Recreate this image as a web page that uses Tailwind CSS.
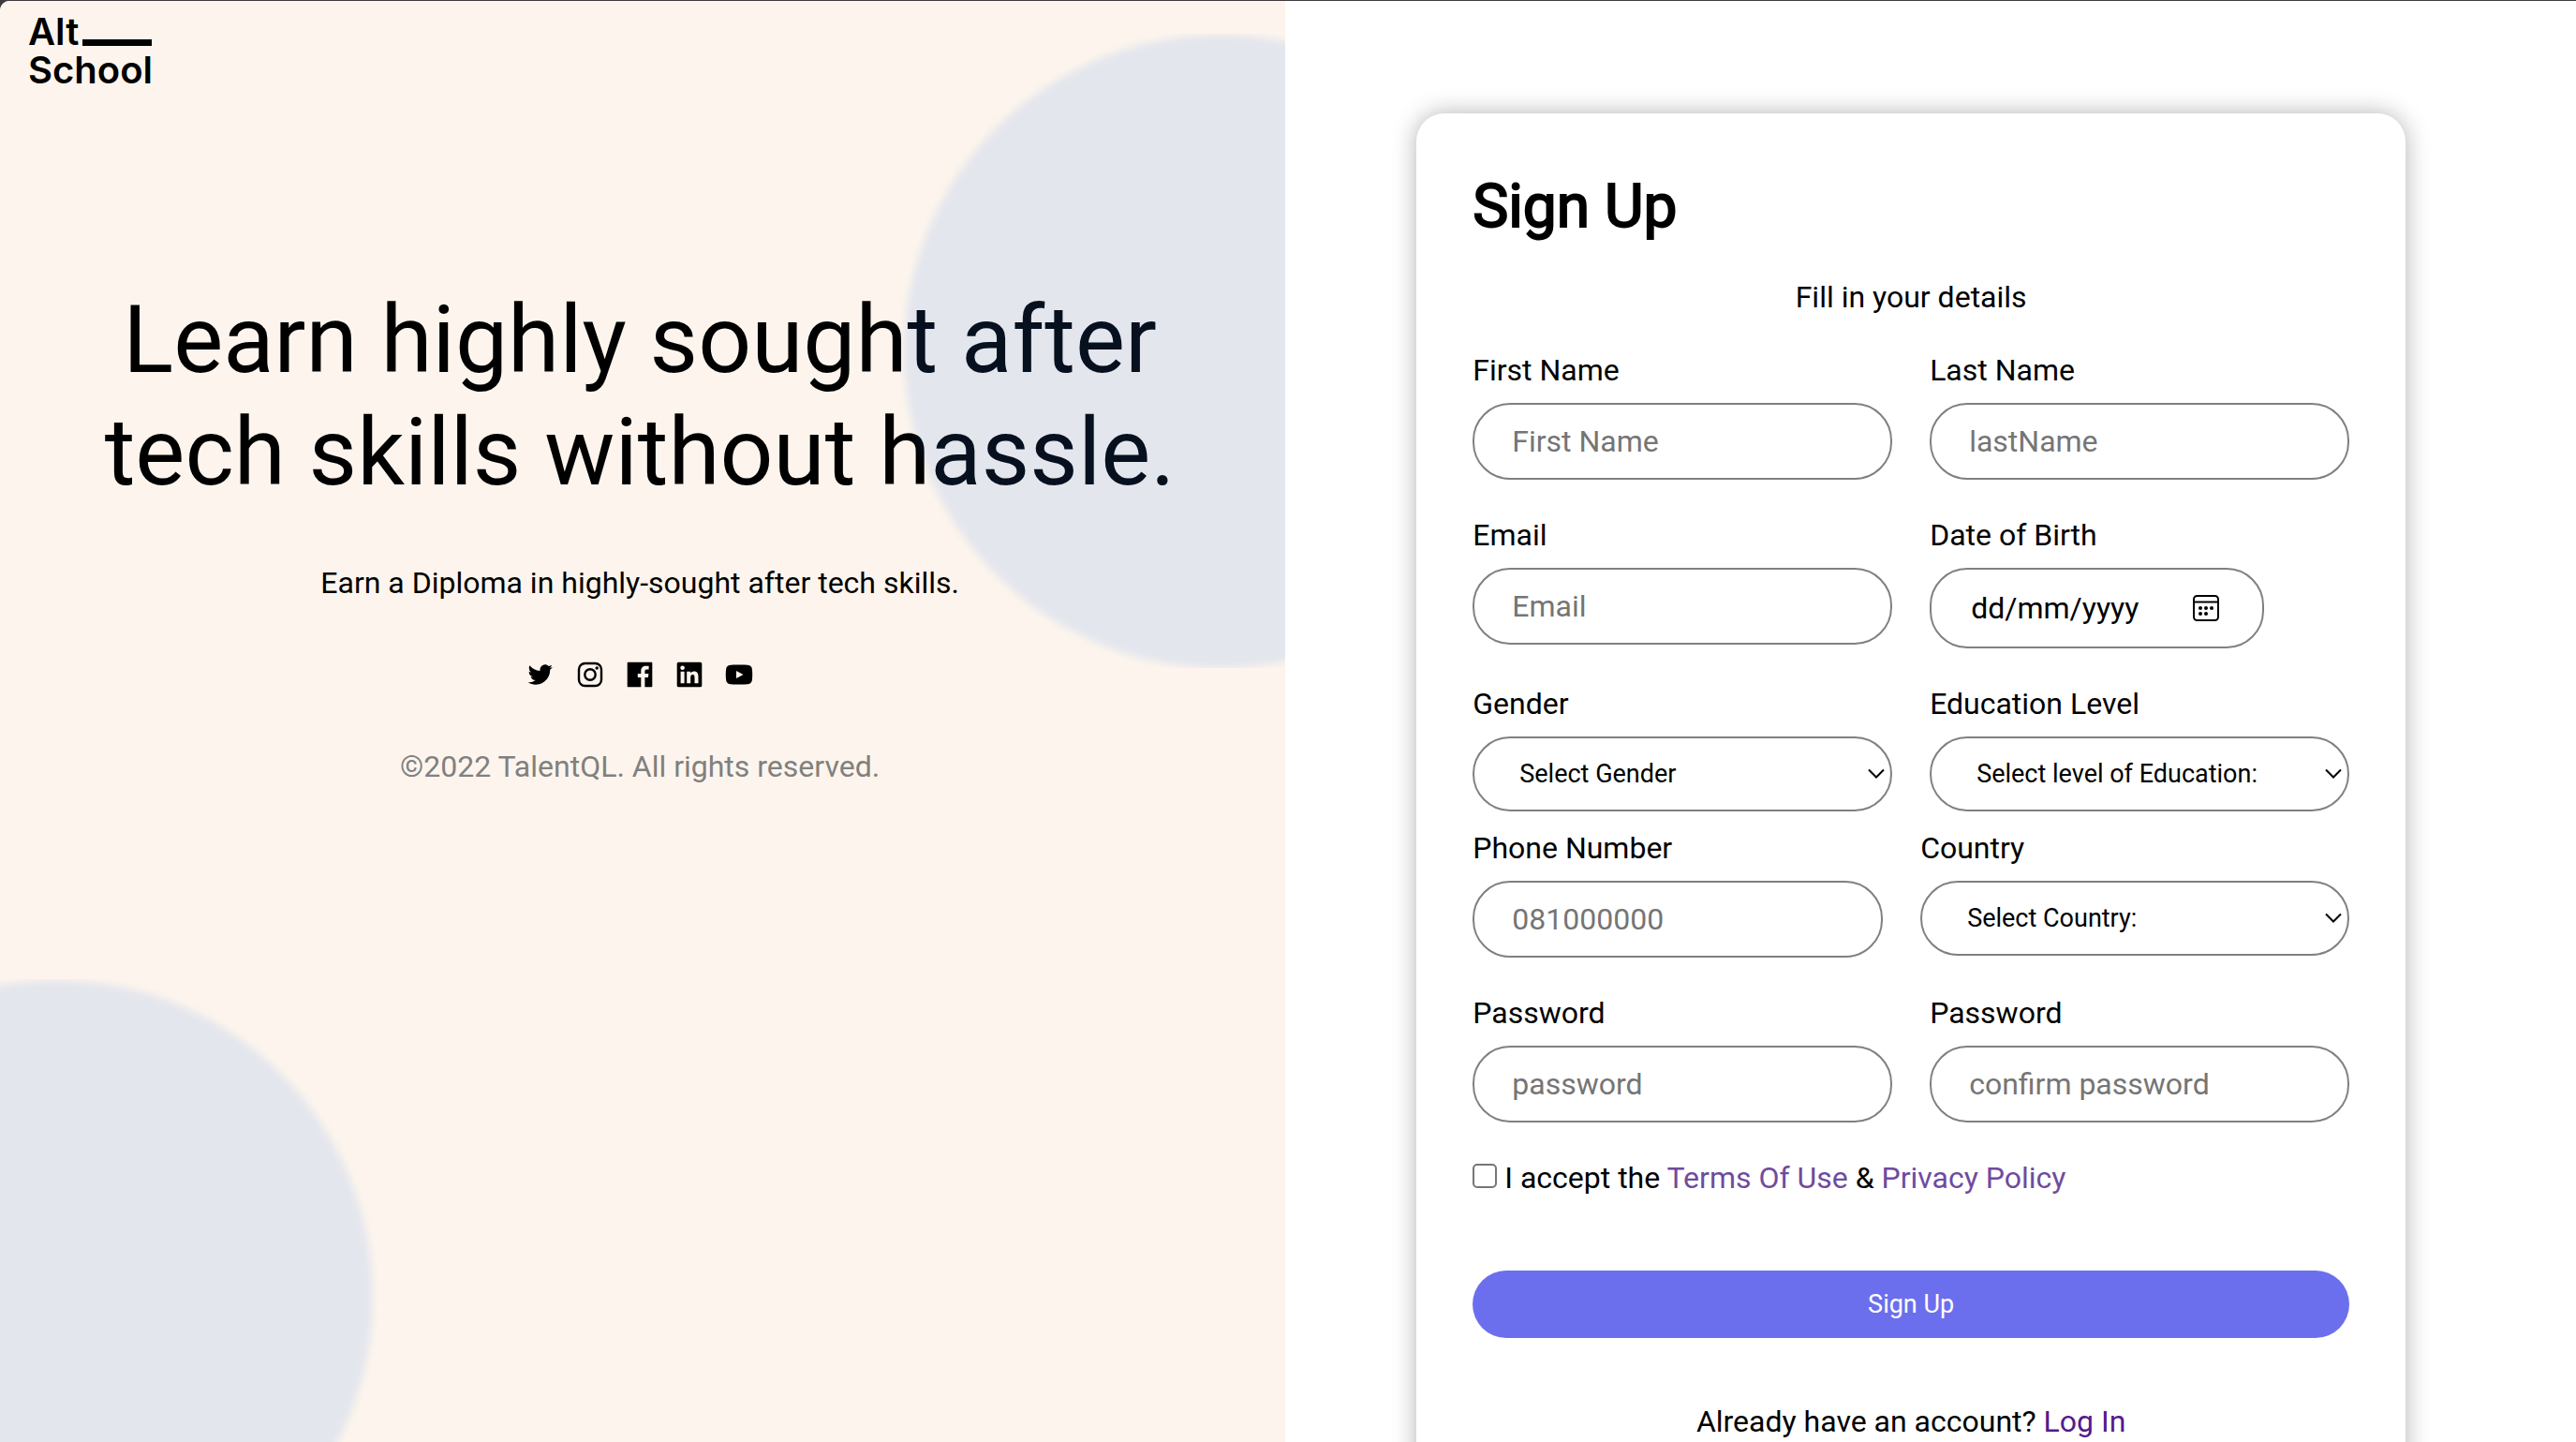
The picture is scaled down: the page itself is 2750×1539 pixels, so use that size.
<!DOCTYPE html>
<html lang="en">
<head>
<meta charset="utf-8">
<meta name="viewport" content="width=device-width, initial-scale=1">
<title>AltSchool – Sign Up</title>
<script src="https://cdn.jsdelivr.net/npm/@tailwindcss/browser@4"></script>
</head>
<body class="h-screen overflow-hidden bg-[#3c3b3f] pt-px font-['Roboto',sans-serif] text-[32px] leading-[38px] text-black">
<div class="flex h-full overflow-hidden rounded-tl-[10px] bg-white">

  <!-- Intro panel -->
  <section class="relative h-full w-[49.9%] shrink-0 overflow-hidden bg-[#fdf5ed]">
    <a href="#" class="flex flex-col pt-[12px] pl-[30px] font-['Inter',sans-serif] text-[40px] leading-[41px] font-semibold">
      <span class="flex items-end gap-1">Alt<span class="mb-[5px] h-[7px] w-[74px] bg-black"></span></span>
      <span>School</span>
    </a>
    <div class="flex flex-col items-center pt-[208px] pr-[60px] pl-[54px] text-center">
      <h1 class="max-w-[1200px] text-[100px] leading-[120px]">Learn highly sought after tech skills without hassle.</h1>
      <p class="mt-[60px]">Earn a Diploma in highly-sought after tech skills.</p>
      <nav aria-label="Social media" class="mt-[60px] flex h-[38px] items-center gap-[21px]">
        <a href="#" aria-label="Twitter"><svg class="size-8" viewBox="0 0 24 24"><path d="M19.633 7.997c.013.175.013.349.013.523 0 5.325-4.053 11.461-11.46 11.461-2.282 0-4.402-.661-6.186-1.809.324.037.636.05.973.05a8.07 8.07 0 0 0 5.001-1.721 4.036 4.036 0 0 1-3.767-2.793c.249.037.499.062.761.062.361 0 .724-.05 1.061-.137a4.027 4.027 0 0 1-3.23-3.953v-.05c.537.299 1.16.486 1.82.511a4.022 4.022 0 0 1-1.796-3.354c0-.748.199-1.434.548-2.032a11.457 11.457 0 0 0 8.306 4.215c-.062-.3-.1-.611-.1-.923a4.026 4.026 0 0 1 4.028-4.028c1.16 0 2.207.486 2.943 1.272a7.957 7.957 0 0 0 2.556-.973 4.02 4.02 0 0 1-1.771 2.22 8.073 8.073 0 0 0 2.319-.624 8.645 8.645 0 0 1-2.019 2.083z"/></svg></a>
        <a href="#" aria-label="Instagram"><svg class="size-8" viewBox="0 0 32 32"><rect x="4" y="4" width="24" height="24" rx="6.500" fill="none" stroke="#000" stroke-width="2.400"/><circle cx="16" cy="16" r="5.700" fill="none" stroke="#000" stroke-width="2.400"/><circle cx="23.200" cy="9" r="1.700"/></svg></a>
        <a href="#" aria-label="Facebook"><svg class="size-8" viewBox="0 0 32 32"><path d="M3.500 2.700h25a.8.8 0 0 1 .8.8v25a.8.8 0 0 1-.8.8h-7.100V19h3.500l.5-4h-4v-2.600c0-1.200.3-2 2-2h2.200V6.800c-.4 0-1.600-.1-3.100-.1-3.100 0-5.200 1.900-5.200 5.300v3h-3.500v4h3.500v10.300H3.500a.8.8 0 0 1-.8-.8v-25a.8.8 0 0 1 .8-.8z"/></svg></a>
        <a href="#" aria-label="LinkedIn"><svg class="size-8" viewBox="0 0 32 32"><path fill-rule="evenodd" d="M4.300 2.700h23.400a1.600 1.600 0 0 1 1.600 1.600v23.400a1.600 1.600 0 0 1-1.600 1.600H4.300a1.600 1.600 0 0 1-1.600-1.600V4.300a1.600 1.600 0 0 1 1.600-1.600zM6.600 12.800v12.500h4V12.800zM8.600 6.500a2.300 2.300 0 1 0 0 4.600 2.300 2.300 0 0 0 0-4.600zM13.200 12.800v12.500h4v-6.200c0-1.700.4-3.200 2.300-3.200s2 1.800 2 3.300v6.100h4v-6.900c0-3.400-.8-6-4.700-6-1.900 0-3.200 1-3.700 2v-1.600z"/></svg></a>
        <a href="#" aria-label="YouTube"><svg class="size-8" viewBox="0 0 32 32"><path fill-rule="evenodd" d="M16 5.500c4 0 8.500.1 10.500.6 1.600.4 2.800 1.600 3.200 3.200.7 3.600.7 9.800 0 13.400-.4 1.600-1.600 2.800-3.200 3.200-4 .8-17 .8-21 0-1.600-.4-2.800-1.600-3.200-3.200-.7-3.600-.7-9.800 0-13.400.4-1.600 1.600-2.800 3.200-3.200 2-.5 6.500-.6 10.500-.6zM13 12v8l7.500-4z"/></svg></a>
      </nav>
      <p class="mt-[60px] text-[#808080]">©2022 TalentQL. All rights reserved.</p>
    </div>
    <!-- Translucent discs laid over the panel -->
    <div class="pointer-events-none absolute top-[35px] -right-[274px] flex h-[677px] w-[687px] items-center justify-center overflow-hidden">
      <div class="size-[676px] shrink-0 rounded-full bg-[#327dee]/[0.125] blur-[4px]"></div>
    </div>
    <div class="pointer-events-none absolute top-[1044px] -left-[284px] flex h-[677px] w-[687px] items-center justify-center overflow-hidden">
      <div class="size-[676px] shrink-0 rounded-full bg-[#327dee]/[0.125] blur-[4px]"></div>
    </div>
  </section>

  <!-- Form panel -->
  <main class="h-full grow overflow-y-auto pt-[120px] pr-[182px] pl-[140px] [scrollbar-width:none]">
    <form class="rounded-[30px] bg-white px-[60px] pt-[62px] pb-[60px] shadow-[0_0_26px_rgba(0,0,0,0.3)]">
      <h2 class="text-[64px] leading-[76px] [-webkit-text-stroke:2px_black]">Sign Up</h2>
      <p class="mt-[39px] text-center">Fill in your details</p>

      <div class="mt-[40px] grid grid-cols-2 gap-x-[40px] gap-y-[40px]">
        <div class="flex flex-col gap-4">
          <label for="first">First Name</label>
          <input id="first" type="text" placeholder="First Name" class="h-[82px] w-full rounded-[40px] border-2 border-[#808080] px-[40px] placeholder:text-[#757575]">
        </div>
        <div class="flex flex-col gap-4">
          <label for="last">Last Name</label>
          <input id="last" type="text" placeholder="lastName" class="h-[82px] w-full rounded-[40px] border-2 border-[#808080] px-[40px] placeholder:text-[#757575]">
        </div>
        <div class="flex flex-col gap-4">
          <label for="email">Email</label>
          <input id="email" type="email" placeholder="Email" class="h-[82px] w-full rounded-[40px] border-2 border-[#808080] px-[40px] placeholder:text-[#757575]">
        </div>
        <div class="flex flex-col gap-4">
          <label for="dob">Date of Birth</label>
          <div class="relative w-[357px]">
            <input id="dob" type="text" placeholder="dd/mm/yyyy" class="block h-[86px] w-full rounded-[40px] border-2 border-[#808080] pr-[90px] pl-[42px] placeholder:text-black">
            <button type="button" aria-label="Open calendar" class="absolute top-[27px] right-[46px]">
              <svg class="size-8" viewBox="0 0 32 32"><rect x="3" y="3" width="26" height="26" rx="3.500" fill="none" stroke="#000" stroke-width="2"/><path d="M3 9.500h26" stroke="#000" stroke-width="2"/><circle cx="10" cy="16" r="2"/><circle cx="16" cy="16" r="2"/><circle cx="22" cy="16" r="2"/><circle cx="10" cy="22" r="2"/><circle cx="16" cy="22" r="2"/></svg>
            </button>
          </div>
        </div>
        <div class="flex flex-col gap-4">
          <label for="gender">Gender</label>
          <div class="relative">
            <select id="gender" class="block h-[80px] w-full appearance-none rounded-[40px] border-2 border-[#808080] bg-white pl-[48px] text-[27px]"><option>Select Gender</option></select>
            <svg class="pointer-events-none absolute top-[34px] right-[8px]" width="18" height="12" viewBox="0 0 18 12" fill="none" stroke="#000" stroke-width="2"><path d="M1 1.500l8 8 8-8"/></svg>
          </div>
        </div>
        <div class="flex flex-col gap-4">
          <label for="education">Education Level</label>
          <div class="relative">
            <select id="education" class="block h-[80px] w-full appearance-none rounded-[40px] border-2 border-[#808080] bg-white pl-[48px] text-[27px]"><option>Select level of Education:</option></select>
            <svg class="pointer-events-none absolute top-[34px] right-[8px]" width="18" height="12" viewBox="0 0 18 12" fill="none" stroke="#000" stroke-width="2"><path d="M1 1.500l8 8 8-8"/></svg>
          </div>
        </div>
      </div>

      <div class="mt-[20px] grid grid-cols-[438fr_458fr] gap-x-[40px]">
        <div class="flex flex-col gap-4">
          <label for="phone">Phone Number</label>
          <input id="phone" type="tel" placeholder="081000000" class="h-[82px] w-full rounded-[40px] border-2 border-[#808080] px-[40px] placeholder:text-[#757575]">
        </div>
        <div class="flex flex-col gap-4">
          <label for="country">Country</label>
          <div class="relative">
            <select id="country" class="block h-[80px] w-full appearance-none rounded-[40px] border-2 border-[#808080] bg-white pl-[48px] text-[27px]"><option>Select Country:</option></select>
            <svg class="pointer-events-none absolute top-[34px] right-[8px]" width="18" height="12" viewBox="0 0 18 12" fill="none" stroke="#000" stroke-width="2"><path d="M1 1.500l8 8 8-8"/></svg>
          </div>
        </div>
      </div>

      <div class="mt-[40px] grid grid-cols-2 gap-x-[40px]">
        <div class="flex flex-col gap-4">
          <label for="password">Password</label>
          <input id="password" type="password" placeholder="password" class="h-[82px] w-full rounded-[40px] border-2 border-[#808080] px-[40px] placeholder:text-[#757575]">
        </div>
        <div class="flex flex-col gap-4">
          <label for="confirm">Password</label>
          <input id="confirm" type="password" placeholder="confirm password" class="h-[82px] w-full rounded-[40px] border-2 border-[#808080] px-[40px] placeholder:text-[#757575]">
        </div>
      </div>

      <div class="mt-[40px] flex items-start gap-2">
        <input id="terms" type="checkbox" class="mt-1 size-[26px] shrink-0 appearance-none rounded-[5px] border-2 border-[#767676] bg-white checked:bg-[#6b6fed]">
        <p><label for="terms">I accept the</label> <a href="#" class="text-[#6f4b9f]">Terms Of Use</a> &amp; <a href="#" class="text-[#6f4b9f]">Privacy Policy</a></p>
      </div>

      <button type="submit" class="mt-[80px] block h-[72px] w-full rounded-[40px] bg-[#6b6fed] text-[27px] text-white">Sign Up</button>
      <p class="mt-[70px] text-center">Already have an account? <a href="#" class="text-[#551a8b]">Log In</a></p>
    </form>
  </main>
</div>
</body>
</html>
